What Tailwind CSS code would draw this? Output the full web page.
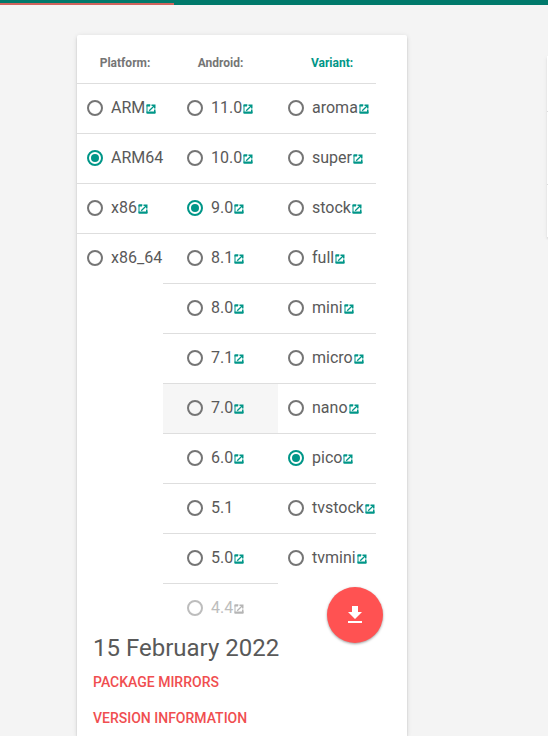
<!DOCTYPE html>
<html lang="en">
<head>
<meta charset="utf-8">
<meta name="viewport" content="width=device-width, initial-scale=1">
<title>Packages</title>
<script src="https://cdn.jsdelivr.net/npm/@tailwindcss/browser@4"></script>
</head>
<body class="flex min-h-screen flex-col overflow-x-hidden bg-[#f4f4f4] font-[Roboto,sans-serif] text-[#595959]">
<header class="h-[5px] shrink-0 bg-[#00796b] pt-[3px]">
  <div class="h-[2px] w-[174px] bg-[#d0625c]" role="progressbar" aria-label="Loading"></div>
</header>
<main class="flex grow items-stretch gap-[140px] overflow-hidden pt-[30px] pl-[77px]">
  <section class="w-[330px] shrink-0 rounded-t-xs bg-white shadow-[0_2px_2px_0_rgba(0,0,0,0.14),0_3px_1px_-2px_rgba(0,0,0,0.2),0_1px_5px_0_rgba(0,0,0,0.12)]">
    <form id="options" class="flex items-start"></form>
    <div class="relative px-4">
      <h1 class="text-2xl leading-[31px]">15 February 2022</h1>
      <a href="#mirrors" class="block text-sm leading-9 font-medium text-[#f04e50] uppercase">Package Mirrors</a>
      <a href="#version" class="block text-sm leading-9 font-medium text-[#f04e50] uppercase">Version Information</a>
      <button type="button" aria-label="Download" class="absolute -top-[46px] right-6 flex size-14 items-center justify-center rounded-full bg-[#ff5252] text-white shadow-[0_1px_2px_0_rgba(0,0,0,0.15),0_1px_3px_0_rgba(0,0,0,0.25)]">
        <svg class="size-6" viewBox="0 0 24 24" fill="currentColor"><path d="M19 9h-4V3H9v6H5l7 7 7-7zM5 18v2h14v-2H5z"/></svg>
      </button>
    </div>
  </section>
  <aside class="mt-[21px] min-w-px flex-1 self-start bg-white shadow-[0_2px_2px_0_rgba(0,0,0,0.14),0_3px_1px_-2px_rgba(0,0,0,0.2),0_1px_5px_0_rgba(0,0,0,0.12)]">
    <div class="h-14 border-b border-[#dedede]"></div>
    <div class="h-[73px] border-b border-[#dedede]"></div>
    <div class="h-[52px]"></div>
  </aside>
</main>
<script>
const columns = [
  { name: 'Platform', box: 'w-[86px]', head: 'pl-[10px] text-[#757575]', row: 'pl-[10px]', checked: 'ARM64', plain: ['ARM64', 'x86_64'],
    items: ['ARM', 'ARM64', 'x86', 'x86_64'] },
  { name: 'Android', box: 'w-[115px]', head: 'text-[#757575]', row: 'pl-6', checked: '9.0', plain: ['5.1'], active: '7.0', disabled: '4.4',
    items: ['11.0', '10.0', '9.0', '8.1', '8.0', '7.1', '7.0', '6.0', '5.1', '5.0', '4.4'] },
  { name: 'Variant', box: 'w-[98px]', head: 'pl-[10px] text-[#009688]', row: 'pl-[10px]', checked: 'pico', plain: [],
    items: ['aroma', 'super', 'stock', 'full', 'mini', 'micro', 'nano', 'pico', 'tvstock', 'tvmini'] }
];
const openIcon = '<svg class="size-3" viewBox="0 0 24 24" fill="currentColor"><path d="M19 19H5V5h6V3H5a2 2 0 0 0-2 2v14a2 2 0 0 0 2 2h14c1.100 0 2-.9 2-2v-6h-3v6zM13 3v3h3.200L7.500 14.700l1.800 1.800L18 7.800V11h3V3z"/><path d="M3 3h7v4H3zM3 17h18v4H3z"/></svg>';
document.getElementById('options').innerHTML = columns.map(c => `
  <div role="radiogroup" aria-label="${c.name}" class="${c.box} shrink-0">
    <div class="flex h-12 items-center justify-center pt-2 text-xs font-bold ${c.head}">${c.name}:</div>
    ${c.items.map(v => {
      const off = v === c.disabled, id = c.name + '-' + v;
      return `<div class="flex h-[50px] items-center border-t border-[#dedede] pb-[2px] ${c.row} ${v === c.active ? 'bg-[#f6f6f6]' : ''} ${off ? 'text-[#bdbdbd]' : ''}">
        <input type="radio" id="${id}" name="${c.name}" ${v === c.checked ? 'checked' : ''} ${off ? 'disabled' : ''}
          class="size-4 shrink-0 appearance-none rounded-full border-2 border-[#757575] p-[2px] checked:border-[#009688] checked:bg-[#009688] checked:bg-clip-content disabled:border-[#bdbdbd]">
        <label for="${id}" class="pl-2 text-base whitespace-nowrap">${v}</label>
        ${c.plain.includes(v) ? '' : `<a href="#${id}" aria-label="Open ${v}" class="${off ? 'text-[#b5b5b5]' : 'text-[#009688]'} pt-[2px]">${openIcon}</a>`}
      </div>`;
    }).join('')}
  </div>`).join('');
</script>
</body>
</html>
